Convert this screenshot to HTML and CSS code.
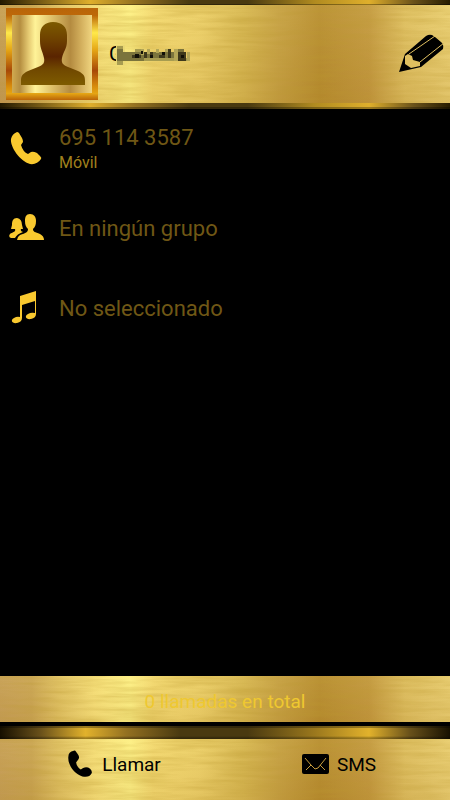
FILE: index.html
```html
<!DOCTYPE html>
<html lang="es">
<head>
<meta charset="utf-8">
<meta name="viewport" content="width=device-width, initial-scale=1">
<title>Contacto</title>
<link rel="stylesheet" href="styles.css">
</head>
<body>
<div class="screen">
  <header class="header">
    <div class="header-body gold">
      <div class="avatar">
        <svg viewBox="0 0 80 78" role="img" aria-label="Foto de contacto">
          <defs>
            <linearGradient id="bronze" x1="0" y1="0" x2="0" y2="1">
              <stop offset="0" stop-color="#7c5a00"/>
              <stop offset=".25" stop-color="#704400"/>
              <stop offset=".55" stop-color="#5a2400"/>
              <stop offset=".75" stop-color="#704800"/>
              <stop offset="1" stop-color="#7e5b00"/>
            </linearGradient>
          </defs>
          <path fill="url(#bronze)" d="M41 7C33 7 28 12 28 20V26C28 34 31 37 32 43C33 48 31 50 26 52L16 56C10 59 9 61 9 66V70H73V66C73 61 72 59 66 56L56 52C51 50 49 48 50 43C51 37 55 34 55 26V20C55 12 50 7 41 7Z"/>
        </svg>
      </div>
      <h1 class="name">
        G
        <svg class="mosaic" viewBox="0 0 76 20" aria-hidden="true">
          <path fill="#e9d873" d="M1 0h9v20H1z"/>
          <path fill="#a79c50" d="M2 1h6v3H2zM2 16h6v4H2zM20 4h6v3h-6zM26 13h46v3H26z"/>
          <path fill="#7b743c" d="M2 4h6v12H2zM8 7h12v9H8zM20 7h50v6H20zM20 13h9v3h-9zM63 4h6v3h-6z"/>
          <path fill="#b3a657" d="M26 4h3v6h-3zM32 4h3v5h-3zM41 4h3v4h-3zM50 4h3v3h-3zM59 4h4v12h-4zM72 7h3v9h-3z"/>
          <path fill="#3e391c" d="M17 10h9v3h-9zM29 7h3v6h-3zM35 7h3v6h-3zM44 10h6v3h-6zM53 4h3v9h-3zM63 7h8v9h-8z"/>
          <path fill="#111007" d="M20 9h4v4h-4zM26 6h2v3h-2zM35 10h3v3h-3zM47 7h3v3h-3zM66 10h3v3h-3z"/>
        </svg>
      </h1>
      <button class="edit" type="button" aria-label="Editar contacto">
        <svg viewBox="0 0 46 40" aria-hidden="true">
          <path d="M7 20 28 2Q31 0 34 1L37 3 43 8Q46 10 45 15L23 33 1 38Z"/>
          <path class="wood" d="M7 22 10 20 14 22 15 26 22 28 22 32 13 34 7 30Z"/>
          <path class="groove" d="M11 20 37 2M22 28 46 9"/>
        </svg>
      </button>
    </div>
  </header>

  <main class="details">
    <section class="row">
      <svg class="icon" viewBox="0 0 36 36" aria-hidden="true">
        <path d="M8 1Q3 3 2 8C1 16 11 30 21 33Q28 34 32 28Q33 27 31 25L28 22Q24 20 22 21L19 23Q14 21 12 14L14 11Q14 9 13 7L10 2Q9 1 8 1Z"/>
      </svg>
      <div class="lines">
        <p class="value">695 114 3587</p>
        <p class="kind">Móvil</p>
      </div>
    </section>
    <section class="row">
      <svg class="icon" viewBox="0 0 36 36" aria-hidden="true">
        <path d="M21 3C17 3 16 6 16 10C16 14 17 16 19 18C19 21 17 22 11 24Q8 26 8 29H35Q35 25 31 23C26 21 24 21 24 18C26 16 27 14 27 10C27 6 25 3 21 3Z"/>
        <path d="M8 7C4 7 3 10 3 14L2 18H6C7 21 4 21 1 23Q-1 26 2 27H6Q8 23 14 21Q11 20 12 18H14L13 14Q13 8 8 7Z"/>
      </svg>
      <p class="value">En ningún grupo</p>
    </section>
    <section class="row">
      <svg class="icon" viewBox="0 0 36 36" aria-hidden="true">
        <path d="M11 5 27 0V23Q27 27 22 28C17 29 15 25 19 23Q22 21 26 22V10L13 14V27Q13 31 8 32C3 33 1 29 5 27Q8 25 11 26Z"/>
      </svg>
      <p class="value">No seleccionado</p>
    </section>
  </main>

  <p class="total gold">0 llamadas en total</p>

  <footer class="footer">
    <div class="actions gold">
      <button class="action" type="button">
        <svg class="action-icon" viewBox="0 0 36 36" aria-hidden="true">
          <path d="M10 1Q3 2 3 9C2 19 11 31 21 34Q30 36 33 30Q34 27 31 24Q27 21 22 23L19 25Q14 22 13 16L16 12Q18 9 15 5L12 1Q11 0 10 1Z"/>
        </svg>
        Llamar
      </button>
      <button class="action" type="button">
        <svg class="action-icon" viewBox="0 0 28 28" aria-hidden="true">
          <rect x="1" y="4" width="27" height="20" rx="2"/>
          <path class="flap" d="M4 8 10 15 14 19 17 18 25 8M10 15 5 20M19 15 24 20"/>
        </svg>
        SMS
      </button>
    </div>
  </footer>
</div>
</body>
</html>
```
FILE: styles.css
```css
* {
  box-sizing: border-box;
}

body {
  margin: 0;
  background: #000;
  color: #000;
  font-family: Roboto, "Liberation Sans", sans-serif;
}

h1,
p {
  margin: 0;
  font-weight: 400;
}

button {
  border: 0;
  padding: 0;
  background: none;
  color: inherit;
  font: inherit;
  cursor: pointer;
}

.screen {
  display: flex;
  flex-direction: column;
  min-height: 100vh;
}

.gold {
  background:
    url("data:image/svg+xml,%3Csvg xmlns='http://www.w3.org/2000/svg' width='450' height='100'%3E%3Cfilter id='n' x='0' y='0' width='1' height='1'%3E%3CfeTurbulence type='fractalNoise' baseFrequency='.018 .22' numOctaves='4' seed='4'/%3E%3CfeColorMatrix values='0 0 0 0 .5 0 0 0 0 .32 0 0 0 0 .03 .6 0 0 0 -.2'/%3E%3C/filter%3E%3Crect width='450' height='100' filter='url(%23n)'/%3E%3C/svg%3E"),
    linear-gradient(175deg, rgba(255, 240, 150, .12), rgba(140, 80, 0, .14)),
    linear-gradient(90deg, #c39a55 0, #c6a050 7%, #dfc062 13%, #f8e17a 21%, #fff388 29%, #f5db72 34%, #efd36c 44%, #d8b953 54%, #c6a144 62%, #b78d30 71%, #c49a41 82%, #e2c466 90%, #efd67a 100%);
}

.header {
  padding: 5px 0 6px;
  background:
    linear-gradient(transparent 4px, rgba(0, 0, 0, .35) 4px 5px, transparent 5px calc(100% - 2px), rgba(0, 0, 0, .3) calc(100% - 2px)),
    linear-gradient(90deg, #221900 0, #6d5313 8%, #dfaf2c 20%, #947121 30%, #493910 42%, #493910 55%, #b18b20 70%, #dfaf2c 82%, #69511a 92%, #271c00 100%);
}

.header-body {
  display: flex;
  align-items: center;
  padding: 3px 6px;
}

.avatar {
  flex: none;
  width: 92px;
  height: 92px;
  padding: 7px 6px;
  background: linear-gradient(#b86409 0, #bd6808 8%, #ffe94b 27%, #e4a414 46%, #a74807 68%, #d78b0b 85%, #e5a514 93%, #b96409 100%);
}

.avatar svg {
  display: block;
  width: 80px;
  height: 78px;
  background: linear-gradient(90deg, #d1aa50 0, #b58e40 10%, #e6cb73 21%, #fff398 29%, #dec06a 50%, #b48b40 73%, #d2ae5c 86%, #f0d580 100%);
}

.name {
  position: relative;
  flex: 1;
  margin-left: 11px;
  font-size: 20px;
  line-height: 24px;
}

.mosaic {
  position: absolute;
  top: 3px;
  left: 6px;
  width: 76px;
  height: 20px;
}

.edit svg {
  display: block;
  width: 46px;
  height: 40px;
}

.wood {
  fill: #dfbf60;
}

.groove {
  fill: none;
  stroke: #dfbf60;
  stroke-width: 1;
}

.details {
  flex: 1;
}

.row {
  display: flex;
  align-items: center;
  gap: 14px;
  min-height: 80px;
  padding: 0 9px;
}

.icon {
  flex: none;
  width: 36px;
  height: 36px;
  fill: #f9c92f;
}

.value {
  color: #6f5715;
  font-size: 22px;
  line-height: 26px;
}

.lines {
  padding-top: 2px;
}

.kind {
  color: #a1811d;
  font-size: 16px;
  line-height: 24px;
}

.total {
  padding: 14px 0 8px;
  color: #efc830;
  font-size: 19px;
  line-height: 24px;
  text-align: center;
}

.footer {
  margin-top: 4px;
  padding-top: 13px;
  background:
    linear-gradient(rgba(0, 0, 0, .3) 0 2px, transparent 2px 10px, rgba(0, 0, 0, .3) 12px),
    linear-gradient(90deg, #160f00 0, #69501a 9%, #e2b22c 19%, #947121 28%, #493910 40%, #493910 55%, #9b781d 70%, #e2b22c 82%, #69511a 91%, #171000 100%);
}

.actions {
  display: grid;
  grid-template-columns: 1fr 1fr;
  padding-bottom: 11px;
}

.action {
  display: flex;
  align-items: center;
  justify-content: center;
  gap: 8px;
  height: 50px;
  padding-left: 2px;
  font-size: 19px;
}

.action-icon {
  width: 28px;
  height: 28px;
}

.flap {
  fill: none;
  stroke: #c79d3e;
  stroke-width: 1;
}
```
